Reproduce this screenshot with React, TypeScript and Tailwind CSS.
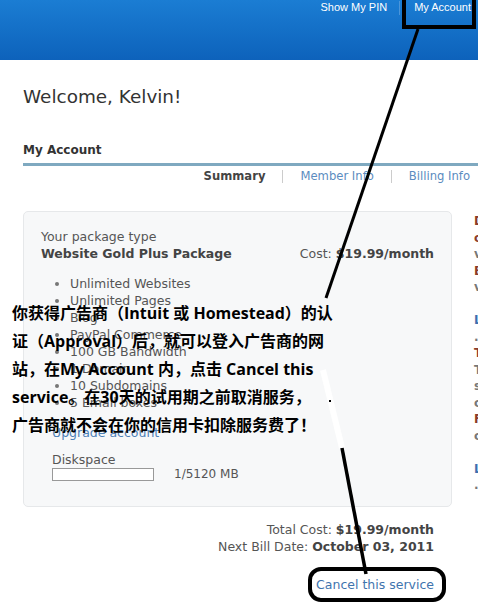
import React from "react";

const items = [
  "Unlimited Websites",
  "Unlimited Pages",
  "Blog",
  "PayPal Commerce",
  "100 GB Bandwidth",
  "1 Domain",
  "10 Subdomains",
  "5 Email boxes",
];

const side = [
  { c: "text-[#8a3b2b]", t: "Do" },
  { c: "text-[#8a3b2b]", t: "ca" },
  { c: "text-[#777]", t: "vi" },
  { c: "text-[#8a3b2b]", t: "Bl" },
  { c: "text-[#777]", t: "vi" },
  { c: "text-[#fff]", t: "." },
  { c: "text-[#3d6fb0]", t: "Le" },
  { c: "text-[#777]", t: ".." },
  { c: "text-[#8a3b2b]", t: "Tr" },
  { c: "text-[#777]", t: "Ta" },
  { c: "text-[#777]", t: "se" },
  { c: "text-[#777]", t: "ca" },
  { c: "text-[#8a3b2b]", t: "Fr" },
  { c: "text-[#777]", t: "ca" },
  { c: "text-[#fff]", t: "." },
  { c: "text-[#3d6fb0]", t: "Le" },
  { c: "text-[#777]", t: ".." },
];

export default function App() {
  return (
    <div
      className="relative w-[478px] h-[607px] overflow-hidden bg-white"
      style={{ fontFamily: '"DejaVu Sans", Verdana, sans-serif' }}
    >
      {/* Header */}
      <div className="h-[60px] bg-gradient-to-b from-[#1b7dd3] to-[#0d62bb] flex justify-end items-start pr-[7px]">
        <div
          className="flex items-center h-[15px] text-[11px] text-white"
          style={{ fontFamily: '"Liberation Sans", Arial, sans-serif' }}
        >
          <span className="pr-[12px]">Show My PIN</span>
          <span className="w-px h-[14px] bg-[#4b95d9]" />
          <span className="pl-[14px]">My Account</span>
        </div>
      </div>

      {/* Welcome */}
      <div className="pl-[23px] pt-[26px] text-[18.4px] leading-[22px] text-[#333]">
        Welcome, Kelvin!
      </div>

      {/* My Account heading */}
      <div className="pl-[23px] pt-[35px]">
        <div className="text-[12px] leading-[14px] font-bold text-[#333] pb-[6px]">
          My Account
        </div>
        <div className="h-[3px] bg-[#7fa9c0]" />
        <div className="flex justify-end items-center h-[21px] text-[11.6px] pr-[8px]">
          <span className="font-bold text-[#444]">Summary</span>
          <span className="mx-[17px] w-px h-[13px] bg-[#ccc]" />
          <span className="text-[#5b8cc0]">Member Info</span>
          <span className="mx-[17px] w-px h-[13px] bg-[#ccc]" />
          <span className="text-[#5b8cc0]">Billing Info</span>
        </div>
      </div>

      {/* Body row */}
      <div className="flex pl-[23px] pt-[24px] gap-[22px]">
        <div className="w-[429px] shrink-0">
          <div className="h-[296px] rounded-[5px] border border-[#e6e8ea] bg-[#f7f8f9] pl-[17px] pr-[17px] pt-[16px] text-[12.5px] text-[#555]">
            <div className="leading-[17px]">Your package type</div>
            <div className="flex justify-between leading-[17px]">
              <span className="font-bold text-[#444]">Website Gold Plus Package</span>
              <span>
                Cost: <b className="text-[#444]">$19.99/month</b>
              </span>
            </div>
            <ul className="mt-[13px] pl-[29px] list-disc marker:text-[#777]">
              {items.map((it) => (
                <li key={it} className="leading-[17px]">
                  {it}
                </li>
              ))}
            </ul>
            <div className="pl-[11px] mt-[13px] leading-[17px] text-[#4d80b8]">
              Upgrade account
            </div>
            <div className="pl-[11px] mt-[11px] leading-[15px]">Diskspace</div>
            <div className="pl-[11px] flex items-center gap-[20px] h-[14px]">
              <div className="w-[102px] h-[13px] border border-[#999] bg-white" />
              <span className="text-[12px]">1/5120 MB</span>
            </div>
          </div>
          <div className="pr-[18px] pt-[14px] text-right text-[12.5px] leading-[17px] text-[#555]">
            <div>
              Total Cost: <b className="text-[#444]">$19.99/month</b>
            </div>
            <div>
              Next Bill Date: <b className="text-[#444]">October 03, 2011</b>
            </div>
            <div className="pt-[21px] text-[12.5px] text-[#3f74ae]">Cancel this service</div>
          </div>
        </div>
        <div className="shrink-0 pt-[2px] text-[12px] leading-[16.5px] font-bold">
          {side.map((s, i) => (
            <div key={i} className={s.c}>
              {s.t}
            </div>
          ))}
        </div>
      </div>

      {/* Annotations */}
      <svg className="absolute inset-0 pointer-events-none" width="478" height="607">
        <line x1="418" y1="29" x2="326" y2="298" stroke="#000" strokeWidth="3" />
        <line x1="323" y1="370" x2="342" y2="448" stroke="#fff" strokeWidth="6" />
        <line x1="342" y1="448" x2="366" y2="574" stroke="#000" strokeWidth="3.5" />
        <rect x="329" y="400" width="2" height="2" fill="#000" />
      </svg>
      <div className="absolute left-[402px] top-[-4px] w-[74px] h-[33px] border-[4px] border-black" />
      <div className="absolute left-[308px] top-[567px] w-[138px] h-[35px] border-[4px] border-black rounded-[13px]" />

      <div
        className="absolute left-[12px] top-[299px] text-[16px] leading-[28px] font-bold text-black whitespace-nowrap"
        style={{ fontFamily: '"Open Sans", "Noto Sans CJK SC", sans-serif' }}
      >
        你获得广告商（Intuit 或 Homestead）的认
        <br />
        证（Approval）后，就可以登入广告商的网
        <br />
        站，在My Account 内，点击 Cancel this
        <br />
        service。在30天的试用期之前取消服务，
        <br />
        广告商就不会在你的信用卡扣除服务费了！
      </div>
    </div>
  );
}
